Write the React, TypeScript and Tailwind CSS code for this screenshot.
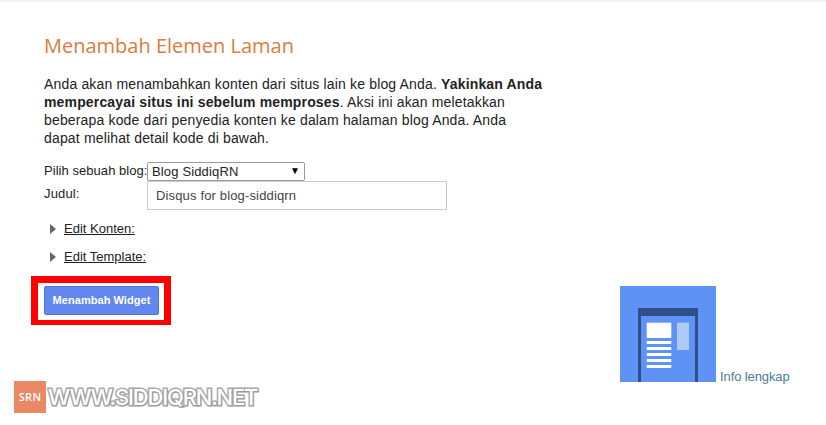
export default function App() {
  return (
    <div className="relative h-[425px] w-[826px] overflow-hidden border-t-2 border-[#f2f2f2] bg-white font-['Liberation_Sans',sans-serif] text-[13px] tracking-[0.15px] text-[#222]">
      <div className="pl-[44px] pt-[32px]">
        <h1 className="font-['Open_Sans',sans-serif] text-[20px] leading-[24px] font-normal tracking-normal text-[#dd7b3f]">
          Menambah Elemen Laman
        </h1>
        <p className="mt-[17px] w-[500px] text-[14px] leading-[18px] tracking-[0.16px]">
          Anda akan menambahkan konten dari situs lain ke blog Anda.{" "}
          <b>Yakinkan Anda mempercayai situs ini sebelum memproses</b>. Aksi ini akan meletakkan
          beberapa kode dari penyedia konten ke dalam halaman blog Anda. Anda dapat melihat detail
          kode di bawah.
        </p>

        <div className="mt-[15px] flex items-start">
          <span className="w-[103px] whitespace-nowrap leading-[17px] tracking-[0.05px]">Pilih sebuah blog:</span>
          <div className="relative h-[19px] w-[158px]">
            <select className="h-full w-full appearance-none rounded-[2px] border border-[#999] bg-white pl-[4px] text-[13px] leading-[17px] tracking-[0.15px] text-[#222]">
              <option>Blog SiddiqRN</option>
            </select>
            <span className="pointer-events-none absolute right-[5px] top-0 text-[10px] leading-[17px] text-black">▼</span>
          </div>
        </div>

        <div className="flex">
          <span className="w-[103px] pt-[4px] leading-[18px]">Judul:</span>
          <input
            readOnly
            value="Disqus for blog-siddiqrn"
            className="h-[29px] w-[300px] border border-[#ccc] bg-white pl-[8px] text-[13px] tracking-[0.15px] text-[#444] outline-none"
          />
        </div>

        <div className="mt-[10px] flex items-center pl-[6px]">
          <span className="h-0 w-0 border-y-[5.5px] border-l-[6px] border-y-transparent border-l-[#666]" />
          <span className="ml-[8px] leading-[18px] tracking-normal underline">Edit Konten:</span>
        </div>
        <div className="mt-[10px] flex items-center pl-[6px]">
          <span className="h-0 w-0 border-y-[5.5px] border-l-[6px] border-y-transparent border-l-[#666]" />
          <span className="ml-[8px] leading-[18px] tracking-normal underline">Edit Template:</span>
        </div>

        <div className="mt-[10px] flex items-start">
          <div className="-ml-[13px] border-x-[7px] border-t-[7px] border-b-[5px] border-[#f00] bg-white pl-[6px] pr-[5px] pt-[3px] pb-[5px]">
            <button className="block h-[29px] w-[115px] rounded-[2px] border border-[#4a72d8] bg-[#6287ee] text-[11px] font-bold tracking-[0.05px] text-white">
              Menambah Widget
            </button>
          </div>
          <div className="ml-[449px] mt-[10px] flex items-end">
            <svg width="96" height="96" viewBox="0 0 96 96" className="block">
              <rect width="96" height="96" fill="#5e93f5" />
              <rect x="18" y="22" width="60" height="74" fill="#2f4f86" />
              <rect x="21" y="30" width="54" height="66" fill="#5e93f5" />
              <rect x="26.700" y="36.700" width="24.600" height="15.300" fill="#fff" />
              <rect x="57" y="36.700" width="12" height="27.300" fill="#aecbf8" />
              <rect x="26.700" y="55" width="24.600" height="3" fill="#fff" />
              <rect x="26.700" y="61" width="24.600" height="3" fill="#fff" />
              <rect x="26.700" y="67" width="24.600" height="3" fill="#fff" />
              <rect x="26.700" y="73" width="24.600" height="3" fill="#fff" />
              <rect x="26.700" y="79" width="24.600" height="3" fill="#fff" />
            </svg>
            <span className="ml-[4px] text-[13px] leading-[10px] tracking-[-0.1px] text-[#4a7c94]">Info lengkap</span>
          </div>
        </div>
      </div>

      <div className="absolute left-[14px] top-[379px] flex items-center">
        <div className="flex h-[32px] w-[32px] items-center justify-center bg-[#e98863] font-['Open_Sans',sans-serif] text-[11px] font-semibold tracking-[0.3px] text-white">
          SRN
        </div>
        <span className="ml-[2px] font-['Inter',sans-serif] text-[22px] leading-[32px] font-medium tracking-[-1.2px] text-white [-webkit-text-stroke:3px_#a8a8a8] [paint-order:stroke_fill] [text-shadow:1px_1px_1px_#999]">
          WWW.SIDDIQRN.NET
        </span>
      </div>
    </div>
  );
}
